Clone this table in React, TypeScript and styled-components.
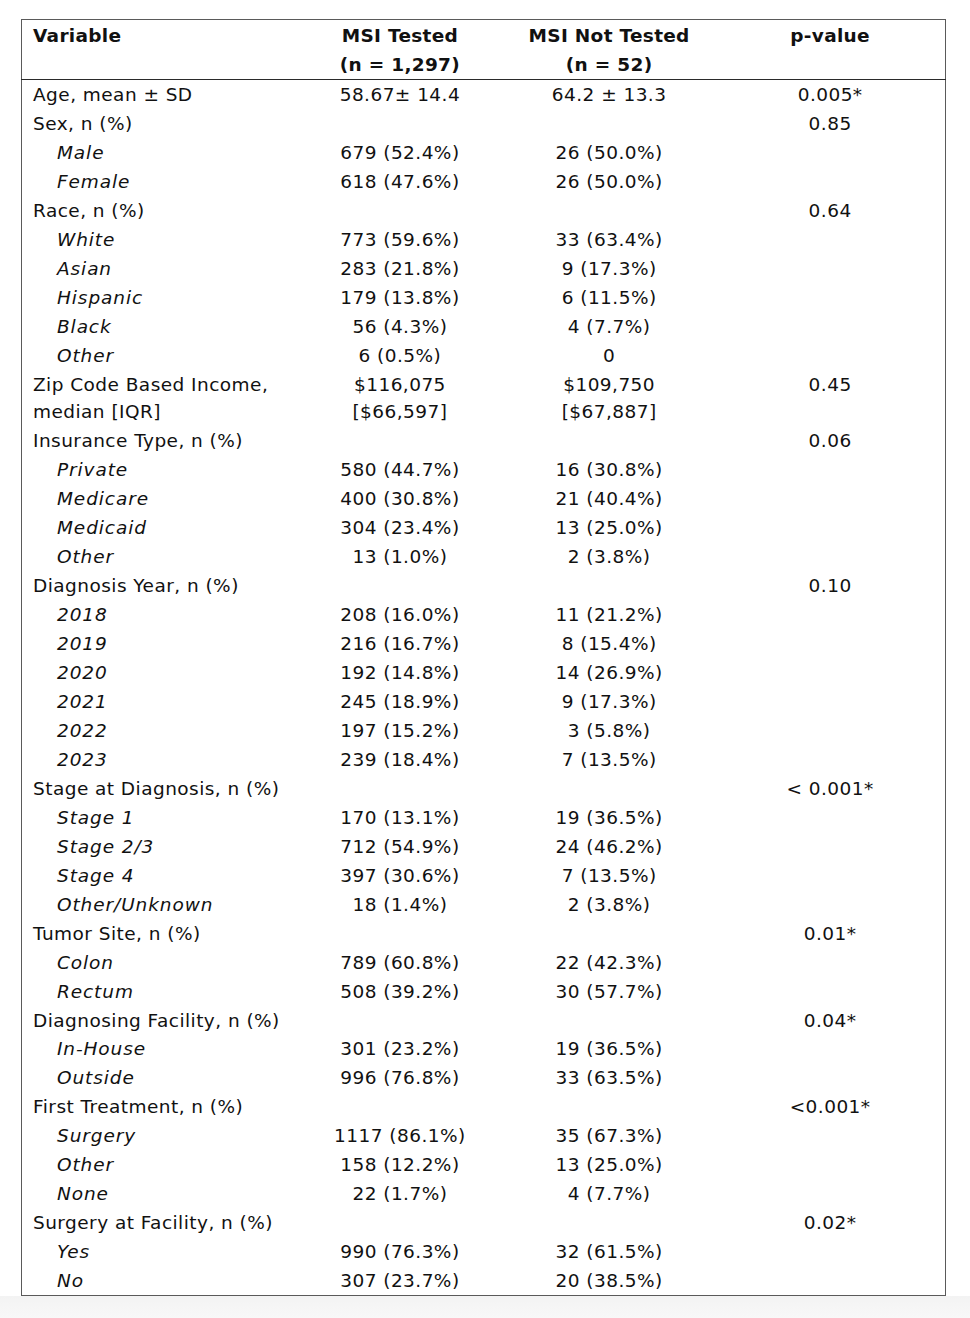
import React from "react";
import styled, { createGlobalStyle } from "styled-components";

const GlobalStyle = createGlobalStyle`
  html, body {
    margin: 0;
    padding: 0;
    background: #ffffff;
  }
`;

const Page = styled.div`
  width: 970px;
  min-height: 1318px;
  display: flex;
  flex-direction: column;
  font-family: "DejaVu Sans", "Liberation Sans", sans-serif;
  color: #111111;
`;

const Sheet = styled.div`
  flex: 1;
  padding: 19px 0 0 21px;
`;

const Table = styled.table`
  border-collapse: collapse;
  border: 1px solid #5a5a5a;
  table-layout: fixed;
  width: 925px;
  font-size: 18.5px;
`;

const Col = styled.col<{ w: number }>`
  width: ${props => props.w}px;
`;

const Head = styled.th<{ left?: boolean }>`
  font-weight: bold;
  line-height: 29px;
  height: 57px;
  padding: 1px 0 0 ${props => (props.left ? 11 : 0)}px;
  text-align: ${props => (props.left ? "left" : "center")};
  vertical-align: top;
  border-bottom: 1px solid #2a2a2a;
  letter-spacing: 0.3px;
`;

const Label = styled.td<{ sub?: boolean }>`
  padding: 2px 0 0 ${props => (props.sub ? 35 : 11)}px;
  line-height: 26.98px;
  font-style: ${props => (props.sub ? "italic" : "normal")};
  letter-spacing: ${props => (props.sub ? 0.9 : 0.45)}px;
  vertical-align: top;
  white-space: nowrap;
`;

const Value = styled.td`
  padding: 2px 0 0;
  line-height: 26.98px;
  letter-spacing: 0.45px;
  text-align: center;
  vertical-align: top;
  white-space: nowrap;
`;

const Footer = styled.div`
  height: 22px;
  background: linear-gradient(#f3f3f3, #f8f8f8);
`;

interface IRow {
  label: React.ReactNode;
  sub?: boolean;
  a?: React.ReactNode;
  b?: React.ReactNode;
  p?: string;
}

const group = (label: string, p: string, items: [string, string, string][]): IRow[] => [
  { label, p },
  ...items.map(([l, a, b]) => ({ label: l, a, b, sub: true }))
];

const ROWS: IRow[] = [
  { label: "Age, mean ± SD", a: "58.67± 14.4", b: "64.2 ± 13.3", p: "0.005*" },
  ...group("Sex, n (%)", "0.85", [
    ["Male", "679 (52.4%)", "26 (50.0%)"],
    ["Female", "618 (47.6%)", "26 (50.0%)"]
  ]),
  ...group("Race, n (%)", "0.64", [
    ["White", "773 (59.6%)", "33 (63.4%)"],
    ["Asian", "283 (21.8%)", "9 (17.3%)"],
    ["Hispanic", "179 (13.8%)", "6 (11.5%)"],
    ["Black", "56 (4.3%)", "4 (7.7%)"],
    ["Other", "6 (0.5%)", "0"]
  ]),
  {
    label: (
      <>
        Zip Code Based Income,
        <br />
        median [IQR]
      </>
    ),
    a: (
      <>
        $116,075
        <br />
        [$66,597]
      </>
    ),
    b: (
      <>
        $109,750
        <br />
        [$67,887]
      </>
    ),
    p: "0.45"
  },
  ...group("Insurance Type, n (%)", "0.06", [
    ["Private", "580 (44.7%)", "16 (30.8%)"],
    ["Medicare", "400 (30.8%)", "21 (40.4%)"],
    ["Medicaid", "304 (23.4%)", "13 (25.0%)"],
    ["Other", "13 (1.0%)", "2 (3.8%)"]
  ]),
  ...group("Diagnosis Year, n (%)", "0.10", [
    ["2018", "208 (16.0%)", "11 (21.2%)"],
    ["2019", "216 (16.7%)", "8 (15.4%)"],
    ["2020", "192 (14.8%)", "14 (26.9%)"],
    ["2021", "245 (18.9%)", "9 (17.3%)"],
    ["2022", "197 (15.2%)", "3 (5.8%)"],
    ["2023", "239 (18.4%)", "7 (13.5%)"]
  ]),
  ...group("Stage at Diagnosis, n (%)", "< 0.001*", [
    ["Stage 1", "170 (13.1%)", "19 (36.5%)"],
    ["Stage 2/3", "712 (54.9%)", "24 (46.2%)"],
    ["Stage 4", "397 (30.6%)", "7 (13.5%)"],
    ["Other/Unknown", "18 (1.4%)", "2 (3.8%)"]
  ]),
  ...group("Tumor Site, n (%)", "0.01*", [
    ["Colon", "789 (60.8%)", "22 (42.3%)"],
    ["Rectum", "508 (39.2%)", "30 (57.7%)"]
  ]),
  ...group("Diagnosing Facility, n (%)", "0.04*", [
    ["In-House", "301 (23.2%)", "19 (36.5%)"],
    ["Outside", "996 (76.8%)", "33 (63.5%)"]
  ]),
  ...group("First Treatment, n (%)", "<0.001*", [
    ["Surgery", "1117 (86.1%)", "35 (67.3%)"],
    ["Other", "158 (12.2%)", "13 (25.0%)"],
    ["None", "22 (1.7%)", "4 (7.7%)"]
  ]),
  ...group("Surgery at Facility, n (%)", "0.02*", [
    ["Yes", "990 (76.3%)", "32 (61.5%)"],
    ["No", "307 (23.7%)", "20 (38.5%)"]
  ])
];

const App = () => (
  <Page>
    <GlobalStyle />
    <Sheet>
      <Table>
        <colgroup>
          <Col w={275} />
          <Col w={206} />
          <Col w={212} />
          <Col w={230} />
        </colgroup>
        <thead>
          <tr>
            <Head left>Variable</Head>
            <Head>
              MSI Tested
              <br />
              (n = 1,297)
            </Head>
            <Head>
              MSI Not Tested
              <br />
              (n = 52)
            </Head>
            <Head>p-value</Head>
          </tr>
        </thead>
        <tbody>
          {ROWS.map((row, i) => (
            <tr key={i}>
              <Label sub={row.sub}>{row.label}</Label>
              <Value>{row.a}</Value>
              <Value>{row.b}</Value>
              <Value>{row.p}</Value>
            </tr>
          ))}
        </tbody>
      </Table>
    </Sheet>
    <Footer />
  </Page>
);

export default App;
